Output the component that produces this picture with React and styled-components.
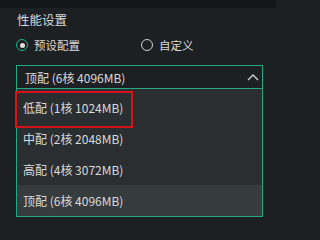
import styled, { createGlobalStyle } from 'styled-components'

const Global = createGlobalStyle`
  html, body {
    margin: 0;
    background: #1d2023;
  }
  * { box-sizing: border-box; }
`

const Frame = styled.div`
  width: 276px;
  height: 232px;
  overflow: hidden;
  background: #1d2023;
`

const TopBar = styled.div`
  height: 8px;
  background: #141618;
`

const Panel = styled.div`
  padding: 3px 13px 0 16px;
  font-family: "Noto Sans CJK SC", "Noto Sans", sans-serif;
  color: #d9d9d9;
  font-size: 12px;
`

const Title = styled.div`
  font-size: 12.5px;
  line-height: 18px;
  margin-left: 1px;
`

const RadioRow = styled.div`
  display: flex;
  align-items: center;
  height: 22px;
  margin-top: 5px;
`

const RadioItem = styled.label`
  display: flex;
  align-items: center;
  gap: 6px;
  width: ${p => p.$width}px;
  line-height: 16px;
  font-size: 11.5px;
`

const Circle = styled.span`
  width: 12px;
  height: 12px;
  border-radius: 50%;
  border: 1.5px solid ${p => (p.$on ? '#23b08e' : '#d0d0d0')};
  display: flex;
  align-items: center;
  justify-content: center;
  &::after {
    content: '';
    width: 5px;
    height: 5px;
    border-radius: 50%;
    background: ${p => (p.$on ? '#e4dede' : 'transparent')};
  }
`

const Select = styled.div`
  margin-top: 9px;
  border: 1px solid #26a887;
  background: #2a2e31;
`

const Head = styled.div`
  display: flex;
  align-items: center;
  justify-content: space-between;
  height: 23px;
  padding: 0 3px 0 8px;
  background: #1d2023;
  border-bottom: 1px solid #26a887;
`

const List = styled.div`
  display: flex;
  flex-direction: column;
  padding-top: 3px;
`

const Option = styled.div`
  position: relative;
  height: 31px;
  display: flex;
  align-items: center;
  padding-left: 6px;
  background: ${p => (p.$active ? '#363b3e' : 'transparent')};
  &::after {
    content: '';
    display: ${p => (p.$marked ? 'block' : 'none')};
    position: absolute;
    left: -2px;
    top: -1px;
    width: 114px;
    height: 33px;
    border: 2px solid #d2141b;
  }
`

const Chevron = () => (
  <svg width="12" height="7" viewBox="0 0 12 7">
    <path d="M1 6 L6 1 L11 6" fill="none" stroke="#d0d0d0" strokeWidth="1.4" />
  </svg>
)

const options = ['低配 (1核 1024MB)', '中配 (2核 2048MB)', '高配 (4核 3072MB)', '顶配 (6核 4096MB)']

export default function App() {
  return (
    <Frame>
      <Global />
      <TopBar />
      <Panel>
        <Title>性能设置</Title>
        <RadioRow>
          <RadioItem $width={125}><Circle $on />预设配置</RadioItem>
          <RadioItem $width={80}><Circle />自定义</RadioItem>
        </RadioRow>
        <Select>
          <Head>
            <span>顶配 (6核 4096MB)</span>
            <Chevron />
          </Head>
          <List>
            {options.map((o, i) => (
              <Option key={o} $marked={i === 0} $active={i === 3}>{o}</Option>
            ))}
          </List>
        </Select>
      </Panel>
    </Frame>
  )
}
